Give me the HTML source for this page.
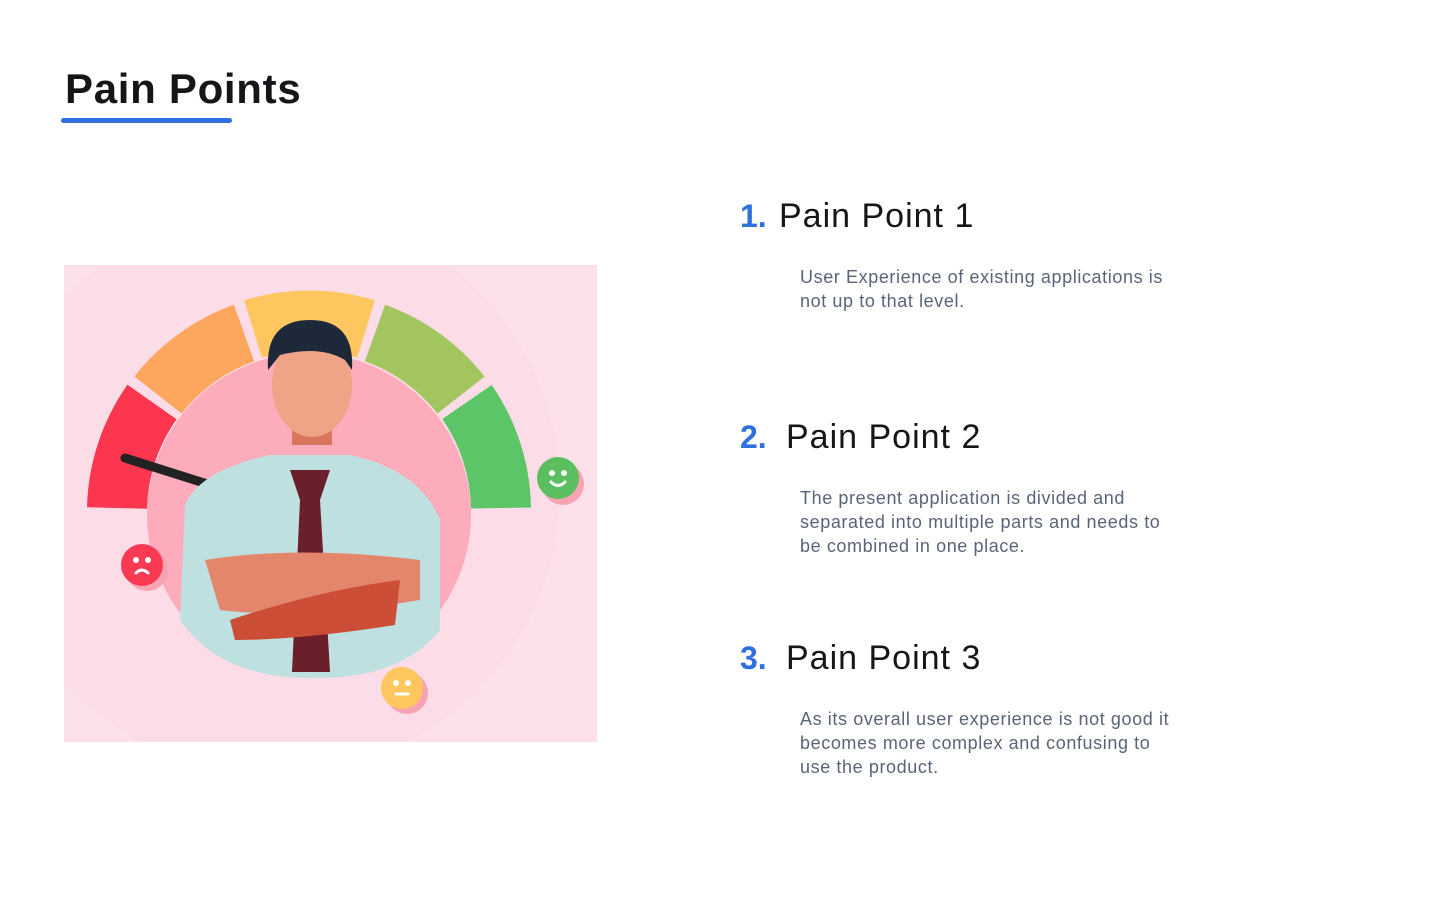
<!DOCTYPE html>
<html><head><meta charset="utf-8"><style>
body{margin:0;width:1440px;height:924px;background:#fff;font-family:"Liberation Sans",sans-serif;position:relative;overflow:hidden}
.t{position:absolute;left:65px;top:65px;font-size:42px;font-weight:bold;color:#15161a;margin:0;letter-spacing:.7px}
.u{position:absolute;left:61px;top:118px;width:171px;height:5px;border-radius:3px;background:#2f6fdf}
.h{position:absolute;left:740px;font-size:34px;color:#15161a;white-space:nowrap;letter-spacing:1px}
.h b{color:#2f6fdf;font-weight:bold;font-size:32px;display:inline-block;width:39px;letter-spacing:0}
.h.w b{width:46px}
.p{position:absolute;left:800px;width:440px;font-size:18px;line-height:24px;color:#5a6478;letter-spacing:.6px;white-space:nowrap}
</style></head><body>
<div class="t">Pain Points</div><div class="u"></div>
<svg style="position:absolute;left:64px;top:265px" width="533" height="477" viewBox="64 265 533 477">
<rect x="64" y="265" width="533" height="477" fill="#fde1ea"/>
<circle cx="275" cy="490" r="285" fill="#fcd8e2" opacity=".6"/>
<circle cx="309" cy="515" r="162" fill="#fdacbc"/>
<g fill="none" stroke-width="60" stroke-linejoin="round">
<path d="M117 508 A192 192 0 0 1 152 402" stroke="#fd3650"/>
<path d="M158 395 A192 192 0 0 1 244 333" stroke="#fda65e"/>
<path d="M253 329 A192 192 0 0 1 366 329" stroke="#fdc65f"/>
<path d="M375 333 A192 192 0 0 1 461 395" stroke="#a3c55f"/>
<path d="M467 402 A192 192 0 0 1 501 508" stroke="#5bc567"/>
</g>
<line x1="125" y1="458" x2="220" y2="488" stroke="#222" stroke-width="9" stroke-linecap="round"/>
<path d="M185 505 Q200 470 270 455 L350 455 Q420 470 440 520 L440 630 Q400 680 310 678 Q220 678 180 620Z" fill="#bfe0e0"/>
<path d="M290 470 L330 470 L320 500 L330 672 L292 672 L300 500Z" fill="#6b1f2a"/>
<path d="M205 560 Q300 545 420 560 L420 600 Q300 620 220 610Z" fill="#e4866c"/>
<path d="M230 620 Q320 590 400 580 L395 625 Q300 640 235 640Z" fill="#cc4e36"/>
<rect x="292" y="375" width="40" height="70" fill="#d9765e"/>
<ellipse cx="312" cy="385" rx="40" ry="52" fill="#eea485"/>
<path d="M268 370 Q265 320 310 320 Q355 320 352 370 L345 360 Q320 345 280 355Z" fill="#1d2838"/>
<circle cx="147" cy="570" r="21" fill="#f6a3b3"/><circle cx="142" cy="565" r="21" fill="#fa3a52"/>
<circle cx="563" cy="484" r="21" fill="#f6a3b3"/><circle cx="558" cy="478" r="21" fill="#5bbf5f"/>
<circle cx="407" cy="693" r="21" fill="#f6a3b3"/><circle cx="402" cy="688" r="21" fill="#fdc65f"/>
<g fill="#fff"><circle cx="136" cy="560" r="3"/><circle cx="148" cy="560" r="3"/><circle cx="552" cy="473" r="3"/><circle cx="564" cy="473" r="3"/><circle cx="396" cy="683" r="3"/><circle cx="408" cy="683" r="3"/></g>
<g stroke="#fff" stroke-width="3" fill="none" stroke-linecap="round"><path d="M136 573 Q142 567 148 573"/><path d="M551 482 Q558 489 565 482"/><path d="M396 694 H408"/></g>
</svg>
<div class="h" style="top:197px"><b>1.</b>Pain Point 1</div>
<div class="p" style="top:265px">User Experience of existing applications is<br>not up to that level.</div>
<div class="h w" style="top:418px"><b>2.</b>Pain Point 2</div>
<div class="p" style="top:486px">The present application is divided and<br>separated into multiple parts and needs to<br>be combined in one place.</div>
<div class="h w" style="top:639px"><b>3.</b>Pain Point 3</div>
<div class="p" style="top:707px">As its overall user experience is not good it<br>becomes more complex and confusing to<br>use the product.</div>
</body></html>
